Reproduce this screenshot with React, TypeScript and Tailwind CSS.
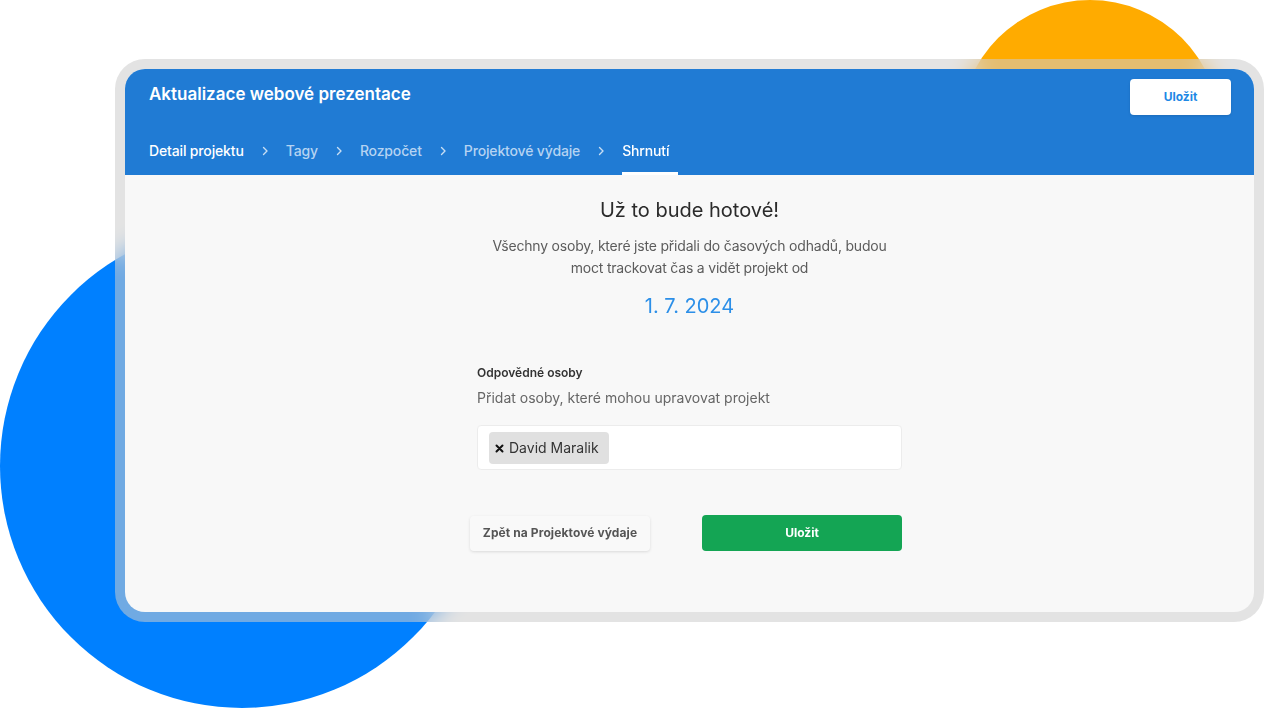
const font = { fontFamily: "Inter, 'Noto Sans', sans-serif" };

function Chevron() {
  return (
    <svg width="8" height="10" viewBox="0 0 8 10" fill="none" className="shrink-0">
      <path d="M2.5 1.5 L6 5 L2.5 8.5" stroke="rgba(255,255,255,0.75)" strokeWidth="1.4" strokeLinecap="round" strokeLinejoin="round" />
    </svg>
  );
}

const tabs = [
  { label: "Detail projektu", state: "done" },
  { label: "Tagy", state: "todo" },
  { label: "Rozpočet", state: "todo" },
  { label: "Projektové výdaje", state: "todo" },
  { label: "Shrnutí", state: "active" },
];

export default function App() {
  return (
    <div className="relative h-[708px] w-[1264px] overflow-hidden bg-white" style={font}>
      {/* decorative circles behind the card */}
      <div className="absolute left-[960px] top-0 h-[260px] w-[260px] rounded-full bg-[#ffab00]" />
      <div className="absolute left-0 top-[224px] h-[484px] w-[484px] rounded-full bg-[#0080ff]" />

      <div className="relative pl-[115px] pt-[59px]">
        <div className="h-[563px] w-[1149px] rounded-[30px] bg-[rgba(204,204,204,0.55)] p-[10px] backdrop-blur-md">
          <div className="flex h-full flex-col overflow-hidden rounded-[20px] bg-[#f8f8f8]">
            <header className="flex h-[106px] flex-col bg-[#207bd4] pl-6 pr-[23px]">
              <div className="flex items-start justify-between pt-[10px]">
                <h1 className="pt-[4px] text-[17px] font-semibold leading-[22px] text-white">
                  Aktualizace webové prezentace
                </h1>
                <button className="flex h-[36px] w-[101px] items-center justify-center rounded-[4px] bg-white text-[12px] font-bold text-[#1e88e5] shadow-sm">
                  Uložit
                </button>
              </div>
              <nav className="flex items-start gap-[17px] pt-[26px]">
                {tabs.map((t, i) => (
                  <div key={t.label} className="flex items-start gap-[17px]">
                    <span
                      className={
                        "border-b-[3px] pb-[11px] text-[14px] font-medium leading-5 tracking-[-0.15px] " +
                        (t.state === "active"
                          ? "border-white pr-[9px] text-white"
                          : t.state === "done"
                          ? "border-transparent text-white"
                          : "border-transparent text-[#b5d3f2]")
                      }
                    >
                      {t.label}
                    </span>
                    {i < tabs.length - 1 && (
                      <span className="flex h-5 items-center">
                        <Chevron />
                      </span>
                    )}
                  </div>
                ))}
              </nav>
            </header>

            <main className="flex flex-col items-center pt-[21px]">
              <h2 className="text-[20px] leading-7 text-[#2b2b2b]">Už to bude hotové!</h2>
              <p className="mt-[11px] w-[420px] text-center text-[14px] leading-[22px] tracking-[-0.2px] text-[#5c5c5c]">
                Všechny osoby, které jste přidali do časových odhadů, budou moct trackovat čas a vidět projekt od
              </p>
              <div className="mt-[13px] text-[20px] leading-7 text-[#2c8fe8]">1. 7. 2024</div>

              <div className="mt-[45px] flex w-[425px] flex-col">
                <label className="text-[12px] font-semibold leading-4 text-[#333]">Odpovědné osoby</label>
                <p className="mt-[7px] text-[14px] leading-5 text-[#666]">
                  Přidat osoby, které mohou upravovat projekt
                </p>
                <div className="mt-[17px] flex h-[45px] items-center rounded-[4px] border border-[#ececec] bg-white px-[11px]">
                  <span className="flex h-[32px] items-center gap-[5px] rounded-[4px] bg-[#e0e0e0] pl-[6px] pr-[10px] text-[14px] text-[#333]">
                    <svg width="9" height="9" viewBox="0 0 9 9" className="mt-[2px]">
                      <path d="M1.5 1.5 L7.5 7.5 M7.5 1.5 L1.5 7.5" stroke="#111" strokeWidth="2" strokeLinecap="round" />
                    </svg>
                    David Maralik
                  </span>
                </div>

                <div className="mt-[45px] flex items-center">
                  <button className="-ml-[7px] h-[35px] w-[180px] rounded-[4px] bg-[#f9f9f9] text-[12px] font-bold tracking-[0.1px] text-[#555] shadow-[0_1px_3px_rgba(0,0,0,0.12)]">
                    Zpět na Projektové výdaje
                  </button>
                  <button className="ml-auto h-[36px] w-[200px] rounded-[4px] bg-[#14a554] text-[12px] font-bold text-white">
                    Uložit
                  </button>
                </div>
              </div>
            </main>
          </div>
        </div>
      </div>
    </div>
  );
}
